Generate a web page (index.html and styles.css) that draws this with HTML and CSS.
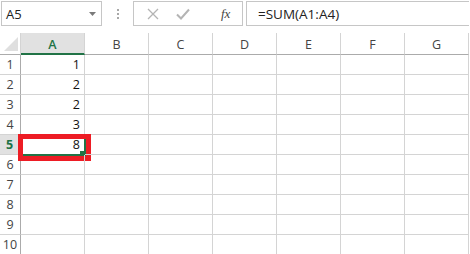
FILE: index.html
```html
<!DOCTYPE html>
<html lang="en">

<head>
    <meta charset="UTF-8">
    <title>Sheet</title>
    <link rel="stylesheet" href="styles.css">
</head>

<body>
    <div class="formula-bar">
        <div class="name-box">
            <span>A5</span>
            <svg class="drop" width="7" height="4" viewBox="0 0 7 4"><path d="M0 0H7L3.5 4Z" fill="#7a7a7a"/></svg>
        </div>
        <div class="grip">
            <i></i><i></i><i></i>
        </div>
        <div class="fx-buttons">
            <svg class="btn" width="12" height="12" viewBox="0 0 12 12"><path d="M1 1L11 11M11 1L1 11" stroke="#b4b4b4" stroke-width="1.3" fill="none"/></svg>
            <svg class="btn" width="14" height="12" viewBox="0 0 14 12"><path d="M1 6.5L5 10.5L13 1.5" stroke="#b4b4b4" stroke-width="2" fill="none"/></svg>
            <span class="fx">fx</span>
        </div>
        <div class="formula-input">=SUM(A1:A4)</div>
    </div>

    <div class="sheet">
        <div class="corner"><svg width="14" height="14" viewBox="0 0 14 14"><path d="M14 0V14H0Z" fill="#dfdfdf"/></svg></div>
        <div class="col-head active">A</div>
        <div class="col-head">B</div>
        <div class="col-head">C</div>
        <div class="col-head">D</div>
        <div class="col-head">E</div>
        <div class="col-head">F</div>
        <div class="col-head">G</div>

        <div class="row-head">1</div><div class="cell num">1</div><div class="cell"></div><div class="cell"></div><div class="cell"></div><div class="cell"></div><div class="cell"></div><div class="cell"></div>
        <div class="row-head">2</div><div class="cell num">2</div><div class="cell"></div><div class="cell"></div><div class="cell"></div><div class="cell"></div><div class="cell"></div><div class="cell"></div>
        <div class="row-head">3</div><div class="cell num">2</div><div class="cell"></div><div class="cell"></div><div class="cell"></div><div class="cell"></div><div class="cell"></div><div class="cell"></div>
        <div class="row-head">4</div><div class="cell num">3</div><div class="cell"></div><div class="cell"></div><div class="cell"></div><div class="cell"></div><div class="cell"></div><div class="cell"></div>
        <div class="row-head active">5</div><div class="cell num selected">8<span class="mark"></span><span class="handle"></span></div><div class="cell"></div><div class="cell"></div><div class="cell"></div><div class="cell"></div><div class="cell"></div><div class="cell"></div>
        <div class="row-head">6</div><div class="cell"></div><div class="cell"></div><div class="cell"></div><div class="cell"></div><div class="cell"></div><div class="cell"></div><div class="cell"></div>
        <div class="row-head">7</div><div class="cell"></div><div class="cell"></div><div class="cell"></div><div class="cell"></div><div class="cell"></div><div class="cell"></div><div class="cell"></div>
        <div class="row-head">8</div><div class="cell"></div><div class="cell"></div><div class="cell"></div><div class="cell"></div><div class="cell"></div><div class="cell"></div><div class="cell"></div>
        <div class="row-head">9</div><div class="cell"></div><div class="cell"></div><div class="cell"></div><div class="cell"></div><div class="cell"></div><div class="cell"></div><div class="cell"></div>
        <div class="row-head">10</div><div class="cell"></div><div class="cell"></div><div class="cell"></div><div class="cell"></div><div class="cell"></div><div class="cell"></div><div class="cell"></div>
    </div>
</body>

</html>
```

FILE: styles.css
```css
* {
    margin: 0;
    padding: 0;
    box-sizing: border-box;
}

body {
    background: #fff;
    font-family: "Open Sans", "Noto Sans", sans-serif;
    color: #222;
    width: 470px;
    height: 254px;
    overflow: hidden;
}

.formula-bar {
    display: flex;
    align-items: center;
    height: 26px;
    padding: 1px 1px 0 1px;
}

.name-box {
    width: 101px;
    height: 25px;
    border: 1px solid #c6c6c6;
    display: flex;
    align-items: center;
    justify-content: space-between;
    padding: 0 5px 0 4px;
    font-size: 13px;
}

.grip {
    width: 31px;
    display: flex;
    flex-direction: column;
    align-items: center;
    gap: 2px;
}

.grip i {
    display: block;
    width: 2px;
    height: 2px;
    background: #a8a8a8;
}

.fx-buttons {
    width: 110px;
    height: 25px;
    border: 1px solid #c6c6c6;
    display: flex;
    align-items: center;
    padding-left: 13px;
}

.fx-buttons .btn + .btn {
    margin-left: 17px;
}

.fx {
    margin-left: 31px;
    font-family: "Liberation Serif", serif;
    font-style: italic;
    font-size: 13px;
    color: #444;
}

.formula-input {
    margin-left: 3px;
    width: 223px;
    height: 25px;
    border: 1px solid #c6c6c6;
    border-right: none;
    display: flex;
    align-items: center;
    padding-left: 11px;
    font-size: 13.5px;
    color: #222;
}

.sheet {
    margin-top: 7px;
    display: grid;
    grid-template-columns: 21px repeat(7, 64px);
    grid-template-rows: 22px repeat(10, 20px);
    font-size: 12.5px;
}

.corner {
    border-right: 1px solid #d4d4d4;
    border-bottom: 1px solid #ababab;
    display: flex;
    align-items: flex-end;
    justify-content: flex-end;
    padding: 0 2px 3px 0;
}

.col-head {
    display: flex;
    align-items: center;
    justify-content: center;
    color: #444;
    border-bottom: 1px solid #ababab;
    border-right: 1px solid #d4d4d4;
    padding-top: 2px;
}

.col-head.active {
    background: #e1e1e1;
    color: #217346;
    font-weight: 600;
    border-bottom: 2px solid #217346;
}

.row-head {
    display: flex;
    align-items: center;
    justify-content: center;
    color: #444;
    border-right: 1px solid #ababab;
    border-bottom: 1px solid #d4d4d4;
}

.row-head.active {
    background: #e1e1e1;
    color: #217346;
    font-weight: 700;
    border-right: 2px solid #217346;
}

.cell {
    border-right: 1px solid #d4d4d4;
    border-bottom: 1px solid #d4d4d4;
    position: relative;
}

.num {
    display: flex;
    align-items: center;
    justify-content: flex-end;
    padding-right: 4px;
    color: #111;
}

.selected {
    outline: 2px solid #217346;
    outline-offset: -1px;
}

.mark {
    position: absolute;
    left: -3px;
    top: -1px;
    width: 73px;
    height: 27px;
    border: 5px solid #ed1c24;
}

.handle {
    position: absolute;
    right: 0;
    bottom: -1px;
    width: 4px;
    height: 4px;
    background: #217346;
}
```
